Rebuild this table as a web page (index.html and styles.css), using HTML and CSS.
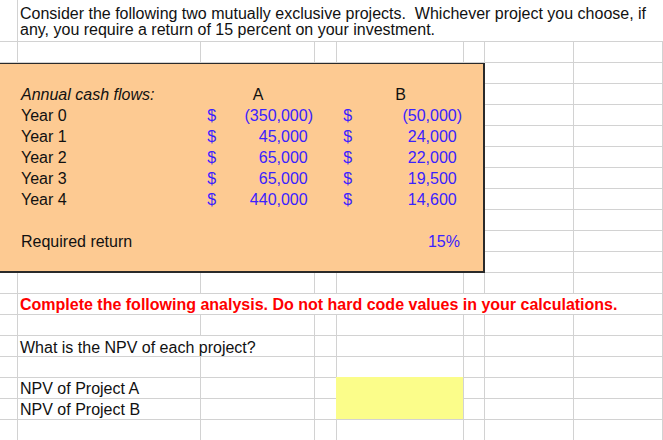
FILE: index.html
```html
<!DOCTYPE html>
<html>
<head>
<meta charset="utf-8">
<title>NPV Worksheet</title>
<link rel="stylesheet" href="styles.css">
</head>
<body>
<div class="sheet">
  <div class="title">Consider the following two mutually exclusive projects.&nbsp; Whichever project you choose, if any, you require a return of 15 percent on your investment.</div>

  <div class="box">
    <div class="spacer"></div>
    <div class="brow">
      <div></div>
      <div class="lbl italic">Annual cash flows:</div>
      <div class="hdr">A</div>
      <div></div>
      <div class="hdr">B</div>
    </div>
    <div class="brow">
      <div></div>
      <div class="lbl">Year 0</div>
      <div class="acct"><span class="cur">$</span><span>(350,000)</span></div>
      <div></div>
      <div class="acct"><span class="cur">$</span><span>(50,000)</span></div>
    </div>
    <div class="brow">
      <div></div>
      <div class="lbl">Year 1</div>
      <div class="acct"><span class="cur">$</span><span class="pos">45,000</span></div>
      <div></div>
      <div class="acct"><span class="cur">$</span><span class="pos">24,000</span></div>
    </div>
    <div class="brow">
      <div></div>
      <div class="lbl">Year 2</div>
      <div class="acct"><span class="cur">$</span><span class="pos">65,000</span></div>
      <div></div>
      <div class="acct"><span class="cur">$</span><span class="pos">22,000</span></div>
    </div>
    <div class="brow">
      <div></div>
      <div class="lbl">Year 3</div>
      <div class="acct"><span class="cur">$</span><span class="pos">65,000</span></div>
      <div></div>
      <div class="acct"><span class="cur">$</span><span class="pos">19,500</span></div>
    </div>
    <div class="brow">
      <div></div>
      <div class="lbl">Year 4</div>
      <div class="acct"><span class="cur">$</span><span class="pos">440,000</span></div>
      <div></div>
      <div class="acct"><span class="cur">$</span><span class="pos">14,600</span></div>
    </div>
    <div class="brow"></div>
    <div class="brow">
      <div></div>
      <div class="lbl">Required return</div>
      <div></div>
      <div></div>
      <div class="pct">15%</div>
    </div>
  </div>

  <div class="t note">Complete the following analysis. Do not hard code values in your calculations.</div>
  <div class="t question">What is the NPV of each project?</div>
  <div class="t npv-a">NPV of Project A</div>
  <div class="t npv-b">NPV of Project B</div>

  <!-- row 1 -->
  <div class="c"></div>
  <!-- row 2 -->
  <div class="c"></div><div class="c"></div><div class="c"></div><div class="c"></div>
  <div class="c"></div><div class="c"></div><div class="c"></div><div class="c"></div>
  <!-- rows 3-12, right of box -->
  <div class="c"></div><div class="c"></div>
  <div class="c"></div><div class="c"></div>
  <div class="c"></div><div class="c"></div>
  <div class="c"></div><div class="c"></div>
  <div class="c"></div><div class="c"></div>
  <div class="c"></div><div class="c"></div>
  <div class="c"></div><div class="c"></div>
  <div class="c"></div><div class="c"></div>
  <div class="c"></div><div class="c"></div>
  <div class="c"></div><div class="c"></div>
  <!-- row 13 -->
  <div class="c"></div><div class="c"></div><div class="c"></div><div class="c"></div>
  <div class="c"></div><div class="c"></div><div class="c"></div><div class="c"></div>
  <!-- row 14 -->
  <div class="c"></div>
  <!-- row 15 -->
  <div class="c"></div><div class="c"></div><div class="c"></div><div class="c"></div>
  <div class="c"></div><div class="c"></div><div class="c"></div><div class="c"></div>
  <!-- row 16 -->
  <div class="c"></div>
  <div class="c"></div><div class="c"></div><div class="c"></div><div class="c"></div><div class="c"></div>
  <!-- row 17 -->
  <div class="c"></div><div class="c"></div><div class="c"></div><div class="c"></div>
  <div class="c"></div><div class="c"></div><div class="c"></div><div class="c"></div>
  <!-- row 18 -->
  <div class="c"></div><div class="c"></div><div class="c"></div>
  <div class="c"></div><div class="c"></div><div class="c"></div>
  <!-- row 19 -->
  <div class="c"></div><div class="c"></div><div class="c"></div>
  <div class="c"></div><div class="c"></div><div class="c"></div>
  <!-- row 20 -->
  <div class="c"></div><div class="c"></div><div class="c"></div><div class="c"></div>
  <div class="c"></div><div class="c"></div><div class="c"></div><div class="c"></div>

  <div class="input"></div>
</div>
</body>
</html>
```

FILE: styles.css
```css
html, body {
  margin: 0;
  padding: 0;
  background: #ffffff;
  overflow: hidden;
}

body {
  font-family: "Liberation Sans", Arial, Helvetica, sans-serif;
  font-size: 16px;
  color: #111111;
}

.sheet {
  display: grid;
  grid-template-columns: 18px 183px 114px 22px 127px 21px 89px 89px;
  grid-template-rows: 42px repeat(19, 21px);
  grid-auto-flow: row dense;
  width: 663px;
}

.c,
.t,
.title {
  box-sizing: border-box;
  border-right: 1px solid #d2d2d2;
  border-bottom: 1px solid #d2d2d2;
}

.t {
  line-height: 20px;
  padding: 1px 0 0 2px;
  white-space: nowrap;
}

.title {
  grid-column: 2 / 9;
  grid-row: 1;
  border-right: none;
  padding: 6px 0 0 2px;
  line-height: 16px;
}

.note {
  grid-column: 2 / 9;
  grid-row: 14;
  color: #ff0000;
  font-weight: bold;
}

.question {
  grid-column: 2 / 4;
  grid-row: 16;
  padding-top: 2px;
}

.npv-a {
  grid-column: 2;
  grid-row: 18;
}

.npv-b {
  grid-column: 2;
  grid-row: 19;
}

.input {
  grid-column: 5;
  grid-row: 18 / 20;
  margin: -1px 0 0 -1px;
  background: #fbfd8a;
  border-right: 1px solid #d2d2d2;
  border-bottom: 1px solid #d2d2d2;
}

/* Orange data block */
.box {
  grid-column: 1 / 7;
  grid-row: 3 / 13;
  margin-top: -1px;
  background: #fdca92;
  border: 2px solid #2a2a2a;
  border-left: none;
  box-sizing: border-box;
  display: flex;
  flex-direction: column;
}

.spacer {
  height: 21px;
  flex: none;
}

.brow {
  display: grid;
  grid-template-columns: 18px 183px 114px 22px 127px;
  height: 21px;
  line-height: 20px;
  flex: none;
  white-space: nowrap;
}

.lbl {
  padding-left: 3px;
}

.italic {
  font-style: italic;
}

.hdr {
  text-align: center;
}

.acct {
  display: flex;
  justify-content: space-between;
  padding: 0 2px 0 1px;
  color: #3a22ff;
}

.cur::before {
  content: "(";
  visibility: hidden;
}

.pos::after {
  content: ")";
  visibility: hidden;
}

.pct {
  text-align: right;
  padding-right: 4px;
  color: #3a22ff;
}
```
